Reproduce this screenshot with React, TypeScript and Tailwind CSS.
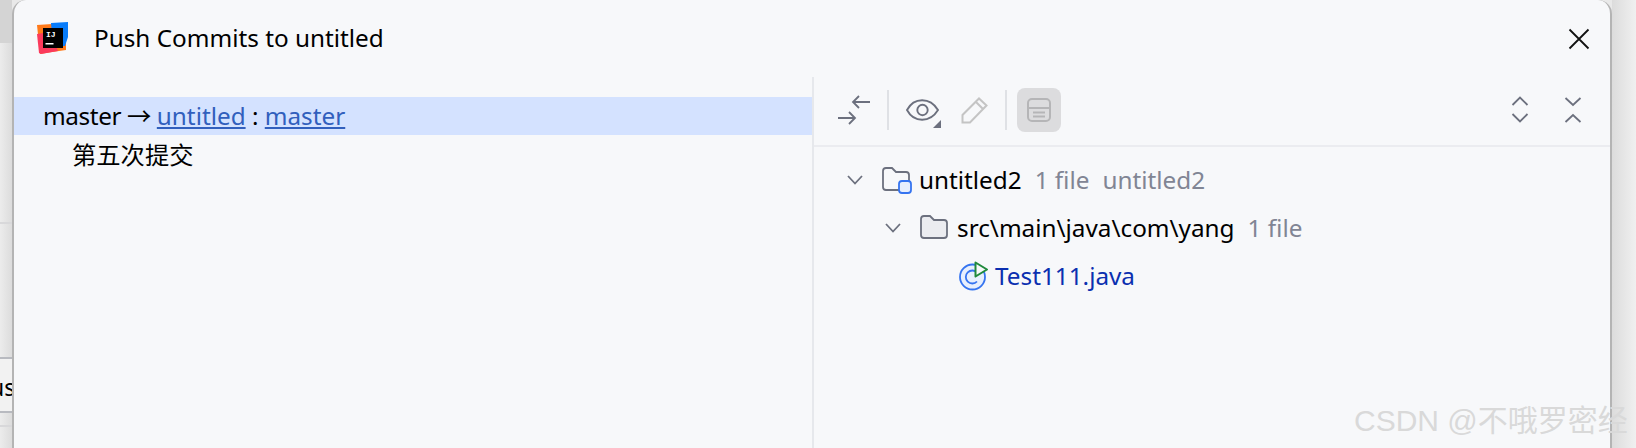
const ff = "font-['Noto_Sans','Noto_Sans_CJK_SC',sans-serif]";

function Logo() {
  return (
    <svg width="34" height="34" viewBox="0 0 34 34">
      <path d="M1 3 L16 2 L30 8 L30 28 L16 30 L4 32 Z" fill="#ff7a1a" />
      <path d="M1 12 L3 31 L5 32 L22 29 L14 10 Z" fill="#fb3a5c" />
      <path d="M15 1 L32 0 L32 15 L29 24 L17 24 Z" fill="#087cfa" />
      <rect x="7" y="6" width="20" height="20" fill="#000" />
      <text x="10" y="15" fill="#fff" fontSize="8" fontWeight="700" fontFamily="Liberation Mono">IJ</text>
      <rect x="9.5" y="21" width="8" height="1.5" fill="#fff" />
    </svg>
  );
}

function Close() {
  return (
    <svg width="22" height="22" viewBox="0 0 22 22" fill="none" stroke="#111" strokeWidth="1.8">
      <path d="M1.5 1.5 L20.5 20.5 M20.5 1.5 L1.5 20.5" />
    </svg>
  );
}

function Arrows() {
  return (
    <svg width="32" height="30" viewBox="0 0 32 30" fill="none" stroke="#6c707e" strokeWidth="1.8">
      <path d="M32 7 H15 M21 1 L15 7 L21 13" />
      <path d="M0 23 H17 M11 17 L17 23 L11 29" />
    </svg>
  );
}

function Eye() {
  return (
    <svg width="36" height="36" viewBox="0 0 36 36" fill="none">
      <path d="M1 18 C8 5 24 5 32 18 C24 31 8 31 1 18 Z" stroke="#6c707e" strokeWidth="1.9" />
      <circle cx="16.5" cy="18" r="5.2" stroke="#6c707e" strokeWidth="1.9" />
      <path d="M35 28 V36 H27 Z" fill="#6c707e" />
    </svg>
  );
}

function Pencil() {
  return (
    <svg width="27" height="27" viewBox="0 0 27 27" fill="none" stroke="#c4c4c4" strokeWidth="2">
      <path d="M1.5 25.5 V18 L18 1.5 L25.5 8.5 L9 25.5 Z M15 5 L22 12" />
    </svg>
  );
}

function Preview() {
  return (
    <svg width="24" height="24" viewBox="0 0 24 24" fill="none" stroke="#b5b5b7" strokeWidth="2">
      <rect x="1" y="1" width="22" height="22" rx="4" />
      <path d="M1 10 H23 M6 14.5 H18 M6 18.5 H18" />
    </svg>
  );
}

function ExpandIcon() {
  return (
    <svg width="18" height="28" viewBox="0 0 18 28" fill="none" stroke="#6c707e" strokeWidth="1.8">
      <path d="M1.5 9 L9 1.5 L16.5 9 M1.5 18 L9 25.5 L16.5 18" />
    </svg>
  );
}

function CollapseIcon() {
  return (
    <svg width="18" height="28" viewBox="0 0 18 28" fill="none" stroke="#6c707e" strokeWidth="1.8">
      <path d="M1.5 2 L9 9 L16.5 2 M1.5 26 L9 19 L16.5 26" />
    </svg>
  );
}

function Chevron() {
  return (
    <svg width="16" height="10" viewBox="0 0 16 10" fill="none" stroke="#6c707e" strokeWidth="1.8">
      <path d="M1 1 L8 8.5 L15 1" />
    </svg>
  );
}

function Folder({ badge }: { badge?: boolean }) {
  return (
    <svg width="30" height="28" viewBox="0 0 30 28" fill="none">
      <path
        d="M1 5 Q1 2 4 2 H10 L14 6 H24 Q27 6 27 9 V21 Q27 24 24 24 H4 Q1 24 1 21 Z"
        fill={badge ? "#f7f8fa" : "#ebecf0"}
        stroke="#6c707e"
        strokeWidth="1.8"
      />
      {badge && <rect x="17" y="15" width="12" height="12" rx="3" fill="#e7effd" stroke="#3574f0" strokeWidth="1.8" />}
    </svg>
  );
}

function RunClass() {
  return (
    <svg width="31" height="30" viewBox="0 0 31 30" fill="none">
      <circle cx="14.5" cy="16" r="12.5" fill="#e7effd" stroke="#3574f0" strokeWidth="1.8" />
      <path d="M19 11.5 A6.5 6.5 0 1 0 19 20.5" stroke="#3574f0" strokeWidth="1.8" />
      <path d="M17.5 1.5 L29 8.5 L17.5 15.5 Z" fill="#f7f8fa" stroke="#208a3c" strokeWidth="2" strokeLinejoin="round" />
    </svg>
  );
}

function Divider() {
  return <div className="h-[40px] w-[2px] bg-[#dfe1e5]" />;
}

export default function App() {
  return (
    <div className={`${ff} relative flex h-[448px] w-[1636px] overflow-hidden bg-[#e9e9e9] text-black`}>
      <div className="flex w-[12px] shrink-0 flex-col overflow-hidden bg-gradient-to-r from-[#ececec] to-[#dcdcdc]">
        <div className="h-[43px] bg-[#d4d4d4]" />
        <div className="mt-[179px] h-[2px] bg-[#d8d8da]" />
        <div className="mt-[133px] h-[2px] bg-[#b8bac0]" />
        <div className="h-[52px] overflow-hidden whitespace-nowrap bg-[#f2f2f2] text-[23px] leading-[56px]">
          <span className="-ml-[10px] inline-block">us</span>
        </div>
        <div className="h-[2px] bg-[#b8bac0]" />
        <div className="mt-[12px] h-[2px] bg-[#d8d8da]" />
      </div>
      <div className="flex w-[1600px] shrink-0 flex-col rounded-t-[14px] border-x-2 border-x-[#b4b4b4] bg-[#f7f8fa]">
        <div className="flex h-[77px] shrink-0 items-center pl-[22px] pr-[20px]">
          <Logo />
          <span className="ml-[24px] flex-1 text-[24.3px] leading-none">Push Commits to untitled</span>
          <Close />
        </div>
        <div className="flex flex-1">
          <div className="w-[800px] shrink-0 border-r-2 border-[#e6e8ec] pt-[20px] text-[24.3px]">
            <div className="flex h-[38px] items-center whitespace-pre bg-[#d4e2ff] pl-[29px]">
              <span className="tracking-[-0.4px]">master → </span><a className="text-[#315fbd] underline">untitled</a> : <a className="text-[#315fbd] underline">master</a>
            </div>
            <div className="flex h-[41px] items-center pl-[58px]">第五次提交</div>
          </div>
          <div className="flex min-w-0 flex-1 flex-col">
            <div className="flex h-[70px] shrink-0 items-center border-b-2 border-[#ebecf0] pb-[2px] pl-[24px] pr-[28px]">
              <Arrows />
              <div className="ml-[17px]"><Divider /></div>
              <div className="ml-[17px]"><Eye /></div>
              <div className="ml-[19px]"><Pencil /></div>
              <div className="ml-[17px]"><Divider /></div>
              <div className="ml-[10px] flex h-[44px] w-[44px] items-center justify-center rounded-[8px] bg-[#dcdcde]">
                <Preview />
              </div>
              <div className="ml-auto flex items-center gap-[35px]">
                <ExpandIcon />
                <CollapseIcon />
              </div>
            </div>
            <div className="pl-[33px] pt-[9px] text-[24.3px]">
              <div className="flex h-[48px] items-center">
                <Chevron />
                <div className="ml-[19px]"><Folder badge /></div>
                <span className="ml-[7px]">untitled2</span>
                <span className="ml-[13px] text-[#818594]">1 file</span>
                <span className="ml-[13px] text-[#818594]">untitled2</span>
              </div>
              <div className="flex h-[48px] items-center pl-[38px]">
                <Chevron />
                <div className="ml-[19px]"><Folder /></div>
                <span className="ml-[7px]">src\main\java\com\yang</span>
                <span className="ml-[13px] text-[#818594]">1 file</span>
              </div>
              <div className="flex h-[48px] items-center pl-[111px]">
                <RunClass />
                <span className="ml-[6px] text-[#0b2fb0]">Test111.java</span>
              </div>
            </div>
          </div>
        </div>
      </div>
      <div className="flex-1 bg-gradient-to-r from-[#dcdcdc] to-[#f0f0f0]" />
      <div className="pointer-events-none absolute left-[1354px] top-[402px] whitespace-nowrap text-[30px] leading-[38px] text-[#d9d9d9] font-['Liberation_Sans','Noto_Sans_CJK_SC',sans-serif]">
        CSDN @不哦罗密经
      </div>
    </div>
  );
}
